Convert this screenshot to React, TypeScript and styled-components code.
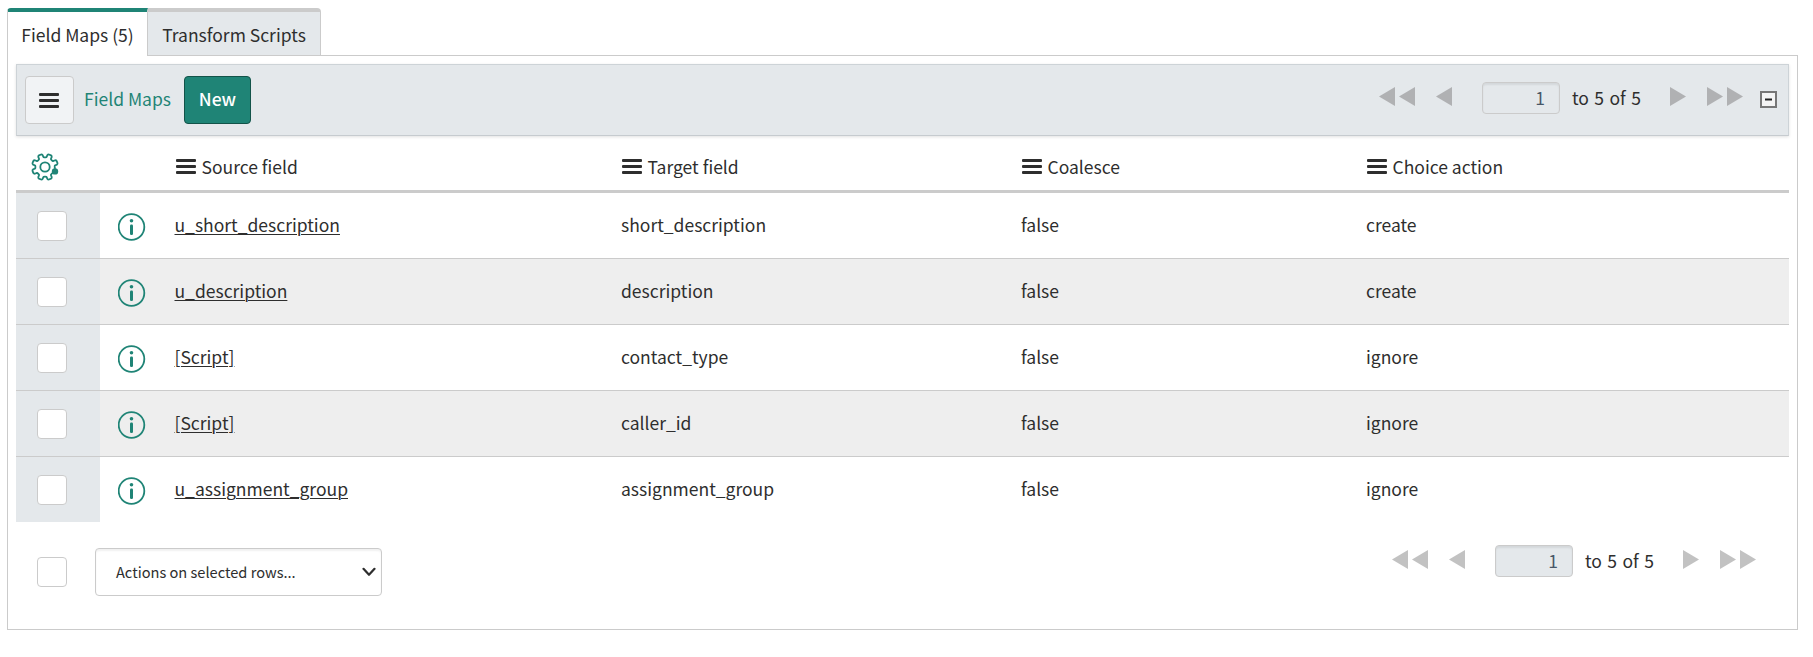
import React from "react";
import styled, { createGlobalStyle, css } from "styled-components";

const FONT = `"Noto Sans CJK SC", "Noto Sans", sans-serif`;
const INK = "#2e2e2e";
const GREEN = "#1f8476";
const LINE = "#cbcbcb";
const SLATE = "#e4e8eb";
const SIZE = "17.5px";

const GlobalStyle = createGlobalStyle`
  * { box-sizing: border-box; }
  body { margin: 0; background: #fff; color: ${INK}; font-family: ${FONT}; font-size: ${SIZE}; line-height: 24px; }
  button, input { font-family: inherit; }
`;

const Page = styled.main`
  width: 1791px;
  margin-left: 7px;
  padding-top: 8px;
`;

const TabBar = styled.nav`
  display: flex;
`;

const Tab = styled.button<{ $active?: boolean }>`
  height: 48px;
  width: ${(p) => (p.$active ? 141 : 173)}px;
  padding: 2px 0 0;
  font-size: ${SIZE};
  line-height: 24px;
  color: ${INK};
  border: 0 solid ${LINE};
  border-top: 4px solid ${(p) => (p.$active ? GREEN : LINE)};
  ${(p) =>
    p.$active
      ? css`
          background: #fff;
          border-left-width: 1px;
          border-right-width: 1px;
          border-top-left-radius: 4px;
          margin-bottom: -1px;
          z-index: 1;
        `
      : css`
          background: ${SLATE};
          border-right-width: 1px;
          border-top-right-radius: 4px;
          margin-bottom: -1px;
          border-bottom-width: 1px;
        `}
`;

const Panel = styled.section`
  height: 575px;
  border: 1px solid ${LINE};
  padding: 8px 8px 0;
`;

const Toolbar = styled.header`
  display: flex;
  align-items: center;
  height: 72px;
  padding: 0 11px 0 8px;
  background: ${SLATE};
  border: 1px solid #cdd3d7;
  border-bottom-color: #c6cbcf;
  box-shadow: 0 1px 3px rgba(0, 0, 0, 0.12);
`;

const MenuButton = styled.button`
  display: flex;
  align-items: center;
  justify-content: center;
  width: 49px;
  height: 48px;
  padding: 0 1px 0 0;
  background: #f1f3f5;
  border: 1px solid ${LINE};
  border-radius: 4px;
`;

const Title = styled.h1`
  width: 88px;
  margin: 0 12px 2px 10px;
  font-size: ${SIZE};
  font-weight: 400;
  line-height: 24px;
  white-space: nowrap;
  color: ${GREEN};
`;

const NewButton = styled.button`
  width: 67px;
  height: 48px;
  padding: 0 0 2px;
  font-size: ${SIZE};
  font-weight: 500;
  line-height: 24px;
  color: #fff;
  background: ${GREEN};
  border: 1px solid #135349;
  border-radius: 4px;
`;

const Pager = styled.div<{ $light?: boolean }>`
  display: flex;
  align-items: center;
  margin-left: auto;
  margin-bottom: ${(p) => (p.$light ? 0 : 4)}px;
  color: ${(p) => (p.$light ? "#c2c2c2" : "#b0b1b3")};
`;

const Arrows = styled.svg`
  display: block;
  height: 19px;
  margin-top: -3px;
`;

const PageInput = styled.input`
  width: 78px;
  height: 32px;
  margin: 0 12px 0 30px;
  padding: 0 14px 1px 0;
  text-align: right;
  font-size: ${SIZE};
  color: #485767;
  background: ${SLATE};
  border: 1px solid ${LINE};
  border-radius: 4px;
  box-shadow: inset 0 2px 2px rgba(0, 0, 0, 0.07);
`;

const Range = styled.span`
  width: 68px;
  margin: 0 30px 1px 0;
  white-space: nowrap;
  word-spacing: 1.5px;
  color: ${INK};
`;

const Group = styled.span`
  display: flex;
  gap: 21px;
`;

const Collapse = styled.svg`
  display: block;
  margin: 0 0 2px 17px;
`;

const Grid = styled.div`
  display: grid;
  grid-template-columns: 84px 75px 446px 400px 345px 1fr;
`;

const HeadRow = styled(Grid)`
  height: 57px;
  border-bottom: 3px solid ${LINE};
`;

const HeadCell = styled.div`
  display: flex;
  align-items: center;
  gap: 5.5px;
  padding: 7px 0 0 1px;
  white-space: nowrap;
`;

const HeadLabel = styled.span`
  padding-top: 1px;
`;

const GearCell = styled(HeadCell)`
  padding: 7px 0 0 15px;
`;

const Row = styled(Grid)<{ $striped: boolean }>`
  height: 66px;
  background: ${(p) => (p.$striped ? "#eeeeee" : "#fff")};
  border-bottom: 1px solid ${LINE};
  &:last-child {
    height: 65px;
    border-bottom: 0;
  }
`;

const Cell = styled.div`
  display: flex;
  align-items: center;
  padding-bottom: 1px;
`;

const CheckCell = styled(Cell)`
  padding: 1px 0 0 21px;
  background: ${SLATE};
`;

const InfoCell = styled(Cell)`
  padding: 3px 0 0 18px;
`;

const Checkbox = styled.span`
  flex: none;
  width: 30px;
  height: 30px;
  background: #fff;
  border: 1px solid ${LINE};
  border-radius: 4px;
`;

const Link = styled.a`
  margin-left: -0.5px;
  color: ${INK};
  text-decoration: underline;
  text-decoration-thickness: 1px;
  text-underline-offset: 2px;
`;

const Footer = styled.footer`
  display: flex;
  align-items: flex-start;
  padding: 23px 33px 0 21px;
`;

const FooterCheck = styled(Checkbox)`
  margin: 12px 28px 0 0;
`;

const Select = styled.div`
  display: flex;
  align-items: center;
  justify-content: space-between;
  width: 287px;
  height: 48px;
  margin-top: 3px;
  padding: 0 5px 0 20px;
  font-size: 14.6px;
  background: #fff;
  border: 1px solid ${LINE};
  border-radius: 4px;
  box-shadow: inset 0 2px 2px rgba(0, 0, 0, 0.06);
`;

const Bars = () => (
  <svg width="20" height="15" viewBox="0 0 20 15" fill={INK}>
    <rect y="0" width="20" height="3" rx="1" />
    <rect y="6" width="20" height="3" rx="1" />
    <rect y="12" width="20" height="3" rx="1" />
  </svg>
);

const polar = (radius: number, degrees: number) => {
  const a = (degrees * Math.PI) / 180;
  return `${(14 + radius * Math.cos(a)).toFixed(2)} ${(14 + radius * Math.sin(a)).toFixed(2)}`;
};

// Seven teeth; the eighth position is taken by the dot.
const gearPath =
  `M${polar(9.9, 36)}` +
  [67.5, 112.5, 157.5, 202.5, 247.5, 292.5, 337.5]
    .map(
      (a) =>
        `Q${polar(9.3, a - 22.5)} ${polar(9.9, a - 14)}L${polar(12.2, a - 11)}Q${polar(13.1, a - 9)} ${polar(13.1, a - 5)}` +
        `L${polar(13.1, a + 5)}Q${polar(13.1, a + 9)} ${polar(12.2, a + 11)}L${polar(9.9, a + 14)}`,
    )
    .join("") +
  `Q${polar(9.3, 0)} ${polar(10.4, 10)}`;

const Gear = () => (
  <svg width="28" height="28" viewBox="0 0 28 28" fill="none" stroke={GREEN} strokeWidth="1.8" strokeLinejoin="round">
    <path d={gearPath} />
    <circle cx="14" cy="14" r="4.7" />
    <circle cx="24" cy="18.4" r="3.2" fill={GREEN} stroke="none" />
  </svg>
);

const Info = () => (
  <svg width="28" height="28" viewBox="0 0 28 28">
    <circle cx="13.5" cy="14" r="12.8" fill="none" stroke={GREEN} strokeWidth="1.8" />
    <circle cx="13.5" cy="7.7" r="1.8" fill={GREEN} />
    <rect x="12" y="11.5" width="3" height="10.5" rx="1.2" fill={GREEN} />
  </svg>
);

const Back = ({ double }: { double?: boolean }) => (
  <Arrows width={double ? 36 : 16} viewBox={`0 0 ${double ? 36 : 16} 19`} fill="currentColor">
    <path d="M16 0V19L0 9.5Z" />
    {double && <path d="M36 0V19L20 9.5Z" />}
  </Arrows>
);

const Forward = ({ double }: { double?: boolean }) => (
  <Arrows width={double ? 36 : 16} viewBox={`0 0 ${double ? 36 : 16} 19`} fill="currentColor">
    <path d="M0 0V19L16 9.5Z" />
    {double && <path d="M20 0V19L36 9.5Z" />}
  </Arrows>
);

const Pagination = ({ light }: { light?: boolean }) => (
  <Pager $light={light}>
    <Group>
      <Back double />
      <Back />
    </Group>
    <PageInput defaultValue="1" aria-label="Row" />
    <Range>to 5 of 5</Range>
    <Group>
      <Forward />
      <Forward double />
    </Group>
  </Pager>
);

const columns = ["Source field", "Target field", "Coalesce", "Choice action"];

const rows = [
  ["u_short_description", "short_description", "false", "create"],
  ["u_description", "description", "false", "create"],
  ["[Script]", "contact_type", "false", "ignore"],
  ["[Script]", "caller_id", "false", "ignore"],
  ["u_assignment_group", "assignment_group", "false", "ignore"],
];

export default function App() {
  return (
    <Page>
      <GlobalStyle />
      <TabBar>
        <Tab $active>Field Maps (5)</Tab>
        <Tab>Transform Scripts</Tab>
      </TabBar>
      <Panel>
        <Toolbar>
          <MenuButton aria-label="Menu">
            <Bars />
          </MenuButton>
          <Title>Field Maps</Title>
          <NewButton>New</NewButton>
          <Pagination />
          <Collapse width="17" height="17" viewBox="0 0 17 17">
            <rect x="1" y="1" width="15" height="15" fill="#f4f4f4" stroke="#777" strokeWidth="2" />
            <path d="M5 8.5H12" stroke="#222" strokeWidth="2" />
          </Collapse>
        </Toolbar>
        <HeadRow>
          <GearCell>
            <Gear />
          </GearCell>
          <span />
          {columns.map((name) => (
            <HeadCell key={name}>
              <Bars />
              <HeadLabel>{name}</HeadLabel>
            </HeadCell>
          ))}
        </HeadRow>
        <div>
          {rows.map(([source, ...rest], i) => (
            <Row key={i} $striped={i % 2 === 1}>
              <CheckCell>
                <Checkbox />
              </CheckCell>
              <InfoCell>
                <Info />
              </InfoCell>
              <Cell>
                <Link>{source}</Link>
              </Cell>
              {rest.map((value, j) => (
                <Cell key={j}>{value}</Cell>
              ))}
            </Row>
          ))}
        </div>
        <Footer>
          <FooterCheck />
          <Select>
            Actions on selected rows...
            <svg width="14" height="10" viewBox="0 0 14 10" fill="none" stroke={INK} strokeWidth="2.2" strokeLinecap="round" strokeLinejoin="round">
              <path d="M1.5 1.8L7 7.8L12.5 1.8" />
            </svg>
          </Select>
          <Pagination light />
        </Footer>
      </Panel>
    </Page>
  );
}
